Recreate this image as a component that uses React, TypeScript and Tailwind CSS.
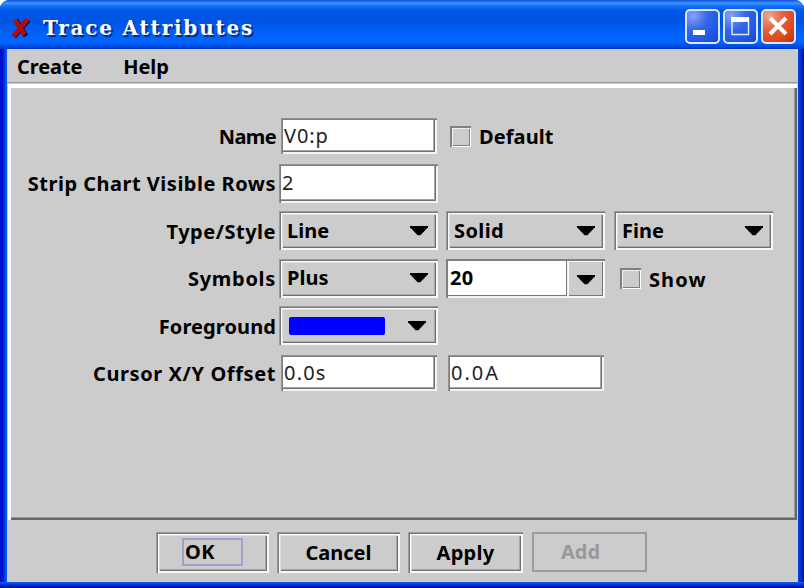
import type { ReactNode } from "react";

const raised =
  "shadow-[inset_1px_1px_0_#9a9a9a,inset_2px_2px_0_#777777,inset_-2px_-2px_0_#f8f8f8,inset_3px_3px_0_#fbfbfb,inset_4px_4px_0_#dedede,inset_-3px_-3px_0_#707070,inset_-4px_-4px_0_#a8a8a8]";
const sunken =
  "shadow-[inset_1px_1px_0_#929292,inset_2px_2px_0_#7c7c7c,inset_-2px_-2px_0_#f4f4f4,inset_-3px_-3px_0_#727272,inset_-4px_-4px_0_#a4a4a4]";

function Arrow() {
  return (
    <svg width="18" height="10" viewBox="0 0 18 10" className="shrink-0">
      <path d="M0 0H18V1.2L10.4 9.2H7.6L0 1.2Z" fill="#000" />
    </svg>
  );
}

function Row({ label, spacing, height, children }: { label: string; spacing: string; height: string; children: ReactNode }) {
  return (
    <div className={`flex items-center ${height}`}>
      <div className={`w-[266px] shrink-0 pt-[2px] text-right whitespace-nowrap ${spacing}`}>{label}</div>
      {children}
    </div>
  );
}

function Combo({ children, className = "", arrow = "mr-[10px]" }: { children: ReactNode; className?: string; arrow?: string }) {
  return (
    <div className={`flex h-[39px] w-[159px] shrink-0 items-center justify-between pl-[8px] ${raised} ${className}`}>
      <span className="flex">{children}</span>
      <span className={arrow}>
        <Arrow />
      </span>
    </div>
  );
}

function Field({ value, className }: { value: string; className: string }) {
  return (
    <div className={`flex shrink-0 items-center bg-white pl-[3px] font-normal text-[#222] ${sunken} ${className}`}>
      {value}
    </div>
  );
}

function Check({ label, className }: { label: string; className: string }) {
  return (
    <div className={`flex items-center gap-[8px] ${className}`}>
      <span className="mb-[2px] size-[21px] shadow-[inset_2px_2px_0_#808080,inset_-1px_-1px_0_#fff,inset_3px_3px_0_#f0f0f0,inset_-2px_-2px_0_#808080]" />
      <span>{label}</span>
    </div>
  );
}

const frame = "flex size-[35px] items-center justify-center rounded-[5px] border-2 border-[#dce6ff]";

export default function App() {
  return (
    <div className="h-[588px] w-[804px] overflow-hidden bg-white font-['Noto_Sans',sans-serif] text-[20px] leading-[28px] font-bold text-black">
      <div className="flex h-full flex-col rounded-t-[9px] bg-[linear-gradient(90deg,#0010c8_0,#0018d0_3px,#0759ec_6px,#0759ec_7px,#0040e0_50%,#0048e8_798px,#0038e0_800px,#0010a0_804px)]">
        <div className="flex h-[49px] shrink-0 items-center rounded-t-[9px] bg-[linear-gradient(180deg,#0c50d8_0,#3b93ff_3px,#1470f8_6px,#0058e6_11px,#0054e2_22px,#0062fa_34px,#0066ff_42px,#0048dc_47px,#0038c8_49px)] pl-[11px]">
          <svg width="20" height="22" viewBox="0 0 20 22" className="mt-[6px] shrink-0">
            <path d="M5 3L15 19M17.5 3L3 20" stroke="#22082c" strokeWidth="5" fill="none" />
            <path d="M4 3L13.5 17.5M16.5 2L2.5 19.5" stroke="#b00c0c" strokeWidth="4.5" fill="none" />
          </svg>
          <span className="mt-[6px] ml-[12px] font-['DejaVu_Serif',serif] text-[20px] tracking-[1.8px] whitespace-nowrap text-white [text-shadow:2px_2px_0_#062a8a]">
            Trace Attributes
          </span>
          <div className="mt-[4px] mr-[8px] ml-auto flex gap-[3px]">
            <div className={`${frame} bg-[radial-gradient(circle_at_20%_15%,#85a5f8_0,#3566e6_40%,#205ae8_70%,#1348cc_100%)]`}>
              <svg width="31" height="31">
                <rect x="6" y="19" width="12" height="5" fill="#fff" />
              </svg>
            </div>
            <div className={`${frame} bg-[radial-gradient(circle_at_20%_15%,#85a5f8_0,#3566e6_40%,#205ae8_70%,#1348cc_100%)]`}>
              <svg width="31" height="31">
                <path d="M7 7V23.5H23.5V7" fill="none" stroke="#dce6ff" strokeWidth="1.5" />
                <rect x="6" y="6" width="18" height="5" fill="#fff" />
              </svg>
            </div>
            <div className={`${frame} bg-[radial-gradient(circle_at_20%_15%,#f3a58f_0,#e2603b_40%,#dc4a1c_70%,#b83210_100%)]`}>
              <svg width="31" height="31">
                <path d="M7 7L23 23M23 7L7 23" stroke="#fff" strokeWidth="4" />
              </svg>
            </div>
          </div>
        </div>

        <div className="mr-[6px] ml-[7px] flex min-h-0 flex-1 flex-col bg-[#ccc]">
          <div className="flex h-[34px] shrink-0 gap-[41px] border-b border-[#999] pt-[4px] pl-[10px]">
            <span className="tracking-[-0.1px]">Create</span>
            <span className="tracking-[-0.1px]">Help</span>
          </div>

          <div className="mt-[1px] mr-[1px] ml-px flex h-[436px] shrink-0 flex-col pt-[28px] pl-[2px] shadow-[inset_3px_4px_0_#fff,inset_-2px_-2px_0_#666,inset_-3px_-3px_0_#999]">
            <Row label="Name" spacing="tracking-[-0.6px]" height="h-[47px]">
              <Field value="V0:p" className="ml-[5px] h-[36px] w-[156px] tracking-[0.9px]" />
              <Check label="Default" className="ml-[13px] pt-[3px] tracking-[0.1px]" />
            </Row>
            <Row label="Strip Chart Visible Rows" spacing="tracking-[0.5px]" height="h-[48px]">
              <Field value="2" className="ml-[3px] h-[39px] w-[159px]" />
            </Row>
            <Row label="Type/Style" spacing="tracking-[0.5px]" height="h-[47px]">
              <Combo className="ml-[3px]">Line</Combo>
              <Combo className="ml-[8px] tracking-[0.4px]">Solid</Combo>
              <Combo className="ml-[9px]">Fine</Combo>
            </Row>
            <Row label="Symbols" spacing="tracking-[0.7px]" height="h-[48px]">
              <Combo className="ml-[3px]">Plus</Combo>
              <div className="ml-[8px] flex h-[39px] w-[159px] shrink-0">
                <div className="flex w-[122px] items-center bg-white pl-[4px] tracking-[0.4px] shadow-[inset_2px_2px_0_#808080,inset_-1px_-2px_0_#f4f4f4,inset_-2px_-3px_0_#777]">
                  20
                </div>
                <div className="flex flex-1 items-center pt-[3px] pl-[9px] shadow-[inset_0_2px_0_#808080,inset_-2px_-2px_0_#f8f8f8,inset_1px_3px_0_#fbfbfb,inset_-3px_-3px_0_#777]">
                  <Arrow />
                </div>
              </div>
              <Check label="Show" className="ml-[15px] pt-[3px] tracking-[1.1px]" />
            </Row>
            <Row label="Foreground" spacing="tracking-[0.1px]" height="h-[47px]">
              <Combo className="ml-[3px]" arrow="mr-[12px]">
                <span className="ml-[2px] h-[18px] w-[96px] rounded-[2px] bg-[#0000ff]" />
              </Combo>
            </Row>
            <Row label="Cursor X/Y Offset" spacing="tracking-[0.6px]" height="h-[48px]">
              <Field value="0.0s" className="ml-[5px] h-[36px] w-[156px] tracking-[1.2px]" />
              <Field value="0.0A" className="ml-[11px] h-[36px] w-[156px] tracking-[2px]" />
            </Row>
          </div>

          <div className="flex h-[62px] pt-[12px] pl-[149px]">
            <div className={`h-[41px] w-[113px] pt-[6px] pl-[26px] ${raised}`}>
              <div className="h-[28px] w-[61px] border-2 border-[#9f9fd0] pl-[1px] leading-[24px] tracking-[0.4px]">OK</div>
            </div>
            <div className={`ml-[8px] flex h-[41px] w-[123px] items-center justify-center ${raised}`}>Cancel</div>
            <div className={`ml-[8px] flex h-[41px] w-[115px] items-center justify-center tracking-[0.3px] ${raised}`}>Apply</div>
            <div className="ml-[9px] h-[40px] w-[115px] border-2 border-[#9c9c9c] pt-[4px] pl-[27px] text-[#999]">Add</div>
          </div>
        </div>
        <div className="h-[6px] shrink-0 bg-[linear-gradient(180deg,#1a5cf0_0,#0040e0_2px,#0034d4_3px,#0010a0_5px,#000c90_6px)]" />
      </div>
    </div>
  );
}
